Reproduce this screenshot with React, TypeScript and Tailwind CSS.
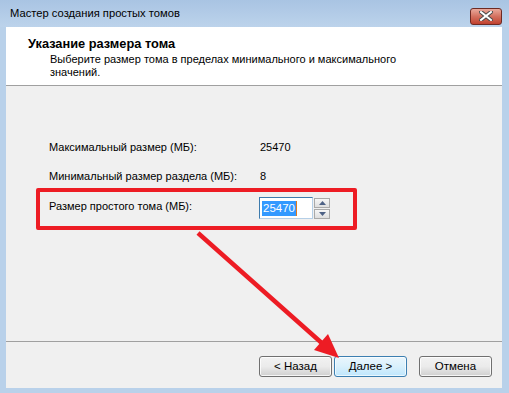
import React from "react";

const font = { fontFamily: '"Liberation Sans", Arial, sans-serif' };

function WinButton({ label, primary }: { label: string; primary?: boolean }) {
  return (
    <div
      className={
        "w-[73px] h-[21px] rounded-[3px] border flex items-center justify-center text-[11.5px] text-black " +
        (primary
          ? "border-[#3c7fb1] bg-gradient-to-b from-[#eaf6fd] via-[#d9f0fc] to-[#bee6fd] shadow-[inset_0_0_0_1px_#ffffffaa]"
          : "border-[#707070] bg-gradient-to-b from-[#f2f2f2] via-[#ebebeb] to-[#cfcfcf] shadow-[inset_0_0_0_1px_#ffffffcc]")
      }
    >
      {label}
    </div>
  );
}

export default function App() {
  return (
    <div className="relative w-[509px] h-[393px] bg-[#b9d1ea] flex flex-col overflow-hidden" style={font}>
      {/* Title bar */}
      <div className="h-[27px] flex items-center justify-between pl-[10px] pr-[7px] bg-gradient-to-b from-[#a9c4e3] to-[#bcd3eb]">
        <span className="text-[11.2px] text-black leading-none whitespace-nowrap">Мастер создания простых томов</span>
        <div className="w-[32px] h-[17px] mt-[5px] rounded-[3px] border border-[#6d2a23] bg-gradient-to-b from-[#e9a99c] via-[#d3705f] to-[#c0402e] flex items-center justify-center">
          <svg width="14" height="10" viewBox="0 0 14 10">
            <path d="M2 1 L12 9 M12 1 L2 9" stroke="#4a4a4a" strokeWidth="4" strokeLinecap="square" />
            <path d="M2 1 L12 9 M12 1 L2 9" stroke="#ffffff" strokeWidth="2" strokeLinecap="square" />
          </svg>
        </div>
      </div>

      {/* Client area */}
      <div className="flex-1 ml-[6px] mr-[7px] mb-[5px] flex flex-col bg-[#f0f0f0]">
        {/* Header */}
        <div className="h-[59px] bg-white border-b border-[#a0a0a0] pl-[22px] pt-[9px] whitespace-nowrap">
          <div className="text-[12.8px] font-bold text-black leading-[16px]">Указание размера тома</div>
          <div className="pl-[22px] text-[11px] text-black leading-[13px] mt-[1px]">
            Выберите размер тома в пределах минимального и максимального
            <br />
            значений.
          </div>
        </div>

        {/* Body */}
        <div className="relative flex-1 border-b border-[#a0a0a0] pl-[43px] pt-[53px] text-[11px] text-black whitespace-nowrap">
          <div className="flex items-center h-[16px]">
            <span className="w-[211px]">Максимальный размер (МБ):</span>
            <span>25470</span>
          </div>
          <div className="flex items-center h-[16px] mt-[13px]">
            <span className="w-[211px]">Минимальный размер раздела (МБ):</span>
            <span>8</span>
          </div>
          <div className="flex items-center mt-[13px]">
            <span className="w-[210px] pb-[4px]">Размер простого тома (МБ):</span>
            <div className="flex items-center">
              <div className="w-[54px] h-[22px] bg-white border border-[#3d7bad] border-b-[#b5cfe7] border-r-[#b5cfe7] flex items-center pl-[2px]">
                <span className="bg-[#3399ff] text-white text-[11.5px] leading-[15px] px-[1px]">25470</span>
                <span className="w-[1px] h-[15px] bg-[#e07a1f]" />
              </div>
              <div className="flex flex-col gap-[1px] ml-[1px] h-[22px] justify-center">
                {[0, 1].map((i) => (
                  <div
                    key={i}
                    className="w-[16px] h-[10px] border border-[#a9a9a9] bg-gradient-to-b from-[#f6f6f6] to-[#dedede] flex items-center justify-center"
                  >
                    <svg width="7" height="4" viewBox="0 0 7 4">
                      <path d={i === 0 ? "M0 4 L3.5 0 L7 4 Z" : "M0 0 L3.5 4 L7 0 Z"} fill="#4d6185" />
                    </svg>
                  </div>
                ))}
              </div>
            </div>
          </div>

          {/* red highlight box */}
          <div className="absolute left-[30px] top-[102px] w-[321px] h-[42px] border-[4px] border-[#ed1c24] rounded-[2px]" />
        </div>

        {/* Footer */}
        <div className="h-[46px] flex items-start justify-end pt-[14px] pr-[10px]">
          <WinButton label="< Назад" />
          <div className="ml-[2px]">
            <WinButton label="Далее >" primary />
          </div>
          <div className="ml-[12px]">
            <WinButton label="Отмена" />
          </div>
        </div>
      </div>

      {/* arrow annotation */}
      <svg className="absolute left-0 top-0 pointer-events-none" width="509" height="393" viewBox="0 0 509 393">
        <line x1="198" y1="233" x2="324" y2="345" stroke="#ed1c24" strokeWidth="4.5" />
        <polygon points="339,358 314,350 328,334" fill="#ed1c24" />
      </svg>
    </div>
  );
}
